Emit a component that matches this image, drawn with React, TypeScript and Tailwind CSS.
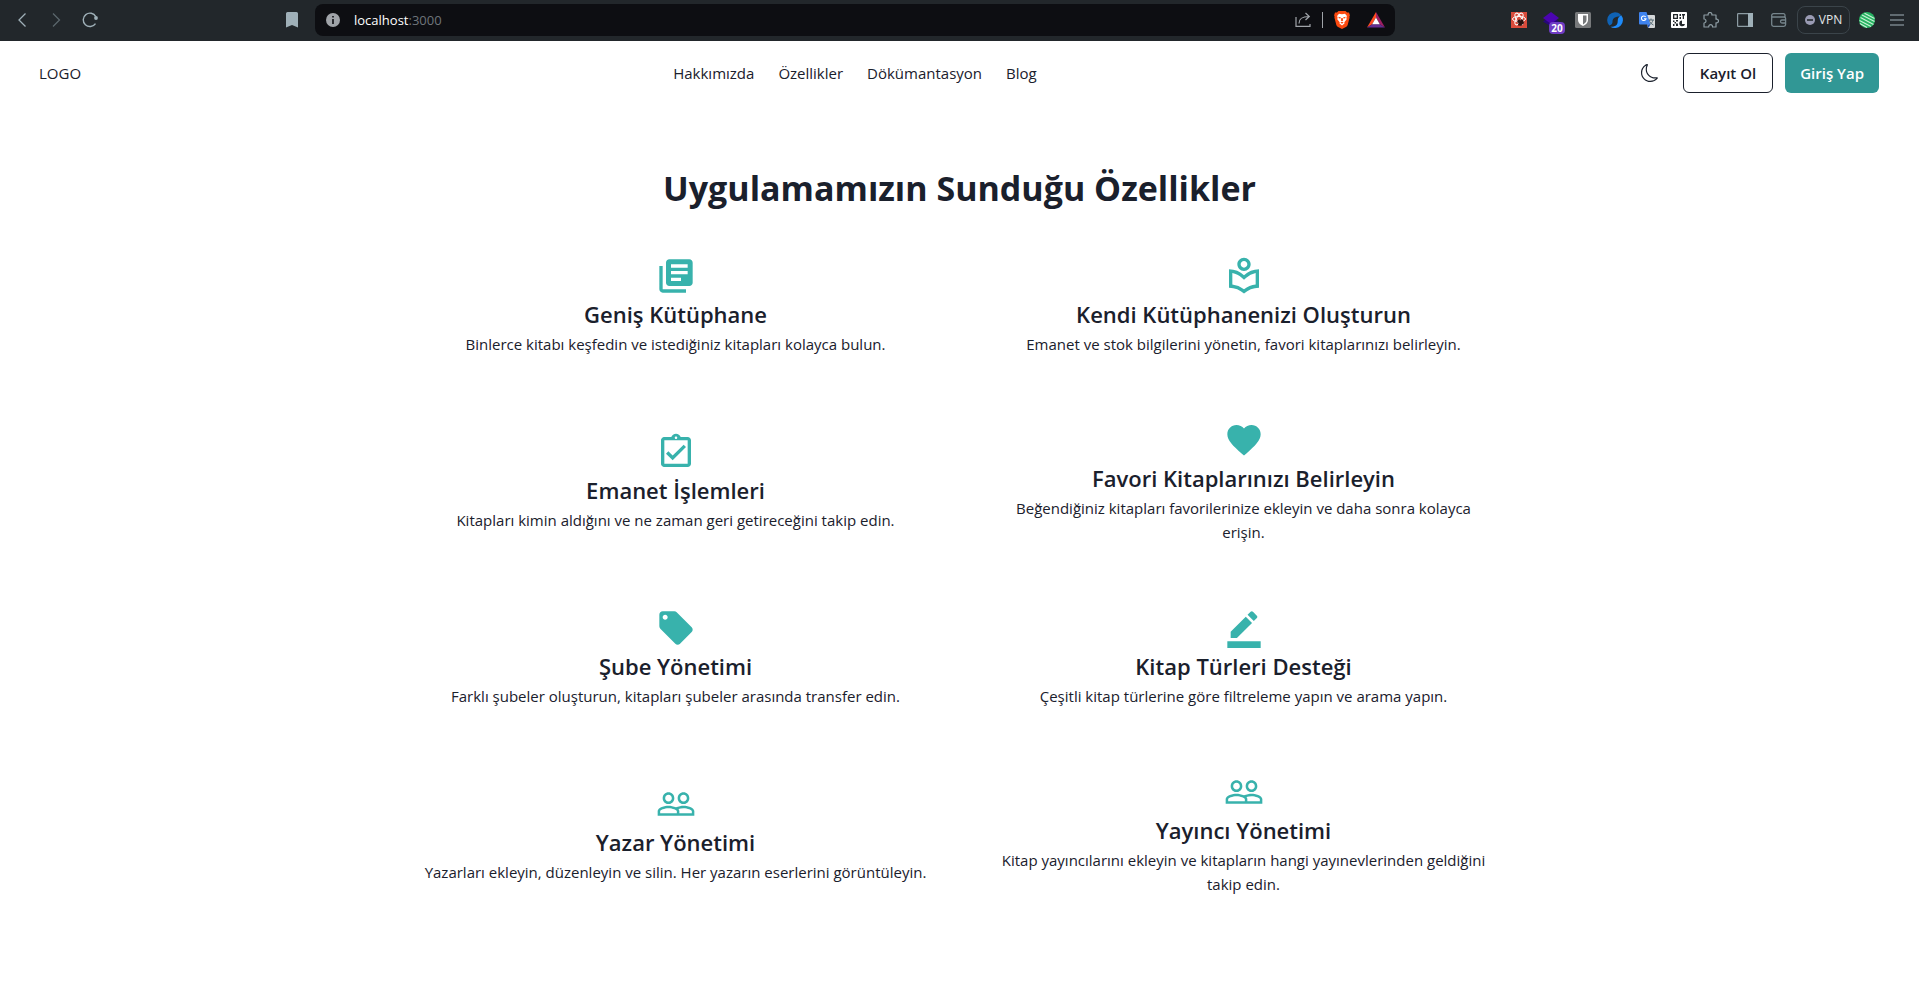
import type { ReactNode } from "react";
import {
  MdLibraryBooks,
  MdOutlineLocalLibrary,
  MdOutlineAssignmentTurnedIn,
  MdFavorite,
  MdLocalOffer,
  MdBorderColor,
  MdPeopleOutline,
} from "react-icons/md";
import { BsMoon } from "react-icons/bs";

type Feature = { icon: ReactNode; title: string; text: string };

const features: Feature[] = [
  { icon: <MdLibraryBooks />, title: "Geniş Kütüphane", text: "Binlerce kitabı keşfedin ve istediğiniz kitapları kolayca bulun." },
  { icon: <MdOutlineLocalLibrary />, title: "Kendi Kütüphanenizi Oluşturun", text: "Emanet ve stok bilgilerini yönetin, favori kitaplarınızı belirleyin." },
  { icon: <MdOutlineAssignmentTurnedIn />, title: "Emanet İşlemleri", text: "Kitapları kimin aldığını ve ne zaman geri getireceğini takip edin." },
  { icon: <MdFavorite />, title: "Favori Kitaplarınızı Belirleyin", text: "Beğendiğiniz kitapları favorilerinize ekleyin ve daha sonra kolayca\nerişin." },
  { icon: <MdLocalOffer />, title: "Şube Yönetimi", text: "Farklı şubeler oluşturun, kitapları şubeler arasında transfer edin." },
  { icon: <MdBorderColor />, title: "Kitap Türleri Desteği", text: "Çeşitli kitap türlerine göre filtreleme yapın ve arama yapın." },
  { icon: <MdPeopleOutline />, title: "Yazar Yönetimi", text: "Yazarları ekleyin, düzenleyin ve silin. Her yazarın eserlerini görüntüleyin." },
  { icon: <MdPeopleOutline />, title: "Yayıncı Yönetimi", text: "Kitap yayıncılarını ekleyin ve kitapların hangi yayınevlerinden geldiğini\ntakip edin." },
];

const links = ["Hakkımızda", "Özellikler", "Dökümantasyon", "Blog"];

function BarButton({ label, children }: { label: string; children: ReactNode }) {
  return (
    <button type="button" aria-label={label} className="flex h-8 w-8 shrink-0 items-center justify-center">
      {children}
    </button>
  );
}

function BraveIcon() {
  return (
    <svg width="16" height="18" viewBox="0 0 16 18">
      <path d="M4.500 0h7l1.600 1.600L15 1.500l.9 2.700-.5 1.500.2.900-2 7.600-1.200 1.500L8 18l-4.400-2.300-1.200-1.500-2-7.600.2-.9L.1 4.200 1 1.500l1.900.1z" fill="#fb4a10" />
      <path d="M5 2.800 8 3.200l3-.4 1.900 2.300-.5 1.700.3 1.400-2.400 3 .2 1.200L8 14.500l-2.500-2.100.2-1.200-2.400-3 .3-1.400-.5-1.700z" fill="#fff" />
      <path d="M4.400 5.800 7 6.400l-.6 1.200-1.600-.4zM11.600 5.800 9 6.400l.6 1.200 1.600-.4zM7.300 7h1.400l.5 2.500L8 10.300l-1.200-.8zM6.300 11.500 8 10.800l1.700.7L8 12.800z" fill="#fb4a10" />
    </svg>
  );
}

function TriangleIcon() {
  return (
    <svg width="18" height="16" viewBox="0 0 18 16">
      <path d="M9 0 0 15.500 5.200 12.200 9 5.600z" fill="#ff4a1f" />
      <path d="M9 0l9 15.500-5.200-3.300L9 5.600z" fill="#9e1f63" />
      <path d="M0 15.500h18l-5.200-3.300H5.200z" fill="#662d91" />
      <path d="M9 5.600 12.800 12.200H5.200z" fill="#fff" />
    </svg>
  );
}

function ReactExtIcon() {
  return (
    <svg width="16" height="16" viewBox="0 0 16 16">
      <path d="M0 0h16v16H0z" fill="#d94b3b" />
      <g fill="none" stroke="#fff" strokeWidth="1">
        <ellipse cx="8" cy="7" rx="6.500" ry="2.600" />
        <ellipse cx="8" cy="7" rx="6.500" ry="2.600" transform="rotate(60 8 7)" />
        <ellipse cx="8" cy="7" rx="6.500" ry="2.600" transform="rotate(120 8 7)" />
      </g>
      <path d="M7 8 8.500 7.500 9.500 8.500l1-1.500 1.500 1 .5 1.500.5 1-.5 1.500-1.500.5-.5 1.500-2-.5L8 14l-1-1 .5-2-1.500-1z" fill="#2a1210" />
    </svg>
  );
}

function LayersIcon() {
  return (
    <span className="relative block h-4 w-4">
      <svg width="16" height="16" viewBox="0 0 16 16">
        <path d="M8 4 16 9.500 8 14.500 0 9.500z" fill="#27077a" />
        <path d="M8 0 16 6 8 12 0 6z" fill="#4b04b0" />
      </svg>
      <span className="absolute top-2.5 left-1.5 flex h-3 w-4 items-center justify-center rounded-sm bg-[#6f3cc4] text-[10px] leading-3 font-bold text-white">20</span>
    </span>
  );
}

function ShieldIcon() {
  return (
    <svg width="16" height="16" viewBox="0 0 16 16">
      <rect width="16" height="16" rx="1.500" fill="#77797b" />
      <path d="M3 2h10v6c0 3-2.500 4.800-5 6-2.500-1.200-5-3-5-6z" fill="#fff" />
      <path d="M8 3.400h3.500V8c0 2-1.500 3.400-3.500 4.400z" fill="#77797b" />
    </svg>
  );
}

function SwirlIcon() {
  return (
    <svg width="16" height="16" viewBox="0 0 16 16">
      <path d="M13.500 2.200A8 8 0 0 0 2.300 13.600C4.300 13 5.500 12 5.500 10 5.500 6 8 4.500 13.500 4.500z" fill="#0f62b4" />
      <path d="M14.300 3.200A8 8 0 0 1 3.500 14.700C8.500 14.700 10.700 13 10.700 9.200 10.700 6 11.500 5 14.300 3.200z" fill="#1e8bfa" />
      <path d="M6 9.300C6.200 7.500 7.500 6.600 10.400 6.500c-.3 1.900-1.600 2.700-4.400 2.800z" fill="#22272b" />
    </svg>
  );
}

function TranslateIcon() {
  return (
    <svg width="16" height="16" viewBox="0 0 16 16">
      <path d="M6 3h9a1 1 0 0 1 1 1v11a1 1 0 0 1-1 1H9z" fill="#d3d6d8" />
      <path d="M9 8h6M12 6.500V8M10 8c.6 2 2 3.800 4.500 5M14 8c-.5 2-1.800 4-4 5.200" fill="none" stroke="#566a73" strokeWidth="1" />
      <path d="M1 0h6.500l3.800 12.500H1a1 1 0 0 1-1-1V1a1 1 0 0 1 1-1z" fill="#3f83ee" />
      <path d="M8 12.500h3.300L9.500 16z" fill="#1e56c0" />
      <path d="M6.700 5A2.300 2.300 0 1 0 7 6.800H5" fill="none" stroke="#fff" strokeWidth="1.100" />
    </svg>
  );
}

function QrIcon() {
  return (
    <svg width="16" height="16" viewBox="0 0 16 16">
      <rect width="16" height="16" rx="1" fill="#fff" />
      <g fill="#22272b">
        <path d="M2 2h5v5H2zM3.300 3.300v2.400h2.400V3.300z" fillRule="evenodd" />
        <path d="M8.500 2H10v2H8.500zM11 2h3v1.500h-1V7h-1.300V3.500H11zM8.500 5H10v2H8.500zM2 8.500h1.500V10H2zM5 8h2v1.500H5zM3.500 10H5v1.500H3.500zM2 12h1.500v2H2zM5 11.500h2V14H5z" />
        <path d="M11 8.500A2.900 2.900 0 1 0 14 12h-3z" />
      </g>
    </svg>
  );
}

function PuzzleIcon() {
  return (
    <svg width="16" height="16" viewBox="0 0 16 16" fill="none" stroke="#8d9ca3" strokeWidth="1.200" strokeLinejoin="round">
      <path d="M1 3h4.200a1.900 1.900 0 1 1 3.600 0H13v4.200a1.900 1.900 0 1 1 0 3.600V15H9.500a1.900 1.900 0 1 0-3.700 0H1v-4a1.900 1.900 0 1 0 0-4z" />
    </svg>
  );
}

function BrowserBar() {
  return (
    <div className="flex h-[41px] items-center bg-[#22272b] px-1.5 pb-px text-[#9fb0b8]">
      <div className="flex w-[309px] shrink-0 items-center gap-0.5">
        <BarButton label="Geri">
          <svg width="16" height="16" viewBox="0 0 16 16" fill="none" stroke="currentColor" strokeWidth="1.300"><path d="M11.500 1.500 5 8l6.500 6.500" /></svg>
        </BarButton>
        <BarButton label="İleri">
          <svg width="16" height="16" viewBox="0 0 16 16" fill="none" stroke="#5b666c" strokeWidth="1.300"><path d="M5 1.500 11.500 8 5 14.500" /></svg>
        </BarButton>
        <BarButton label="Yenile">
          <svg width="18" height="18" viewBox="0 0 18 18" fill="none" stroke="currentColor" strokeWidth="1.400"><path d="M14.500 12.600A6.700 6.700 0 1 1 14.800 5.600" /><circle cx="15" cy="7" r="1.900" fill="currentColor" stroke="none" /></svg>
        </BarButton>
        <div className="flex-1" />
        <div className="pr-[7px]">
          <BarButton label="Yer imi">
            <svg width="12" height="16" viewBox="0 0 12 16" fill="currentColor"><path d="M1.500 0h9A1.500 1.500 0 0 1 12 1.500V15.500L6 13 0 15.500V1.500A1.500 1.500 0 0 1 1.500 0z" /></svg>
          </BarButton>
        </div>
      </div>
      <div className="flex h-8 w-full max-w-[1080px] min-w-0 items-center rounded-lg bg-[#0d0e12] pr-[3px] pl-[11px]">
        <svg className="shrink-0" width="14" height="14" viewBox="0 0 14 14"><circle cx="7" cy="7" r="7" fill="#a0a4a9" /><path d="M6.200 3h1.600v1.600H6.200zM6.200 6h1.600v5H6.200z" fill="#0d0e12" /></svg>
        <div className="flex-1 pl-3.5 text-[13px] leading-5 text-[#6f757b]"><span className="text-white">localhost</span>:3000</div>
        <BarButton label="Paylaş">
          <svg width="16" height="16" viewBox="0 0 16 16" fill="none" stroke="#a0a4a9" strokeWidth="1.200"><path d="M1 5v9.300h14V12M4 11.500C4 6.500 7 4.500 14 4.500M10.500 1 14.300 4.500 10.500 8" /></svg>
        </BarButton>
        <div className="mx-[3px] h-4 w-px bg-[#a0a4a9]" />
        <div className="flex gap-0.5">
          <BarButton label="Brave Shields"><BraveIcon /></BarButton>
          <BarButton label="Brave Rewards"><TriangleIcon /></BarButton>
        </div>
      </div>
      <div className="ml-auto flex shrink-0 items-center">
        <BarButton label="React"><ReactExtIcon /></BarButton>
        <BarButton label="Katmanlar"><LayersIcon /></BarButton>
        <BarButton label="Parola kasası"><ShieldIcon /></BarButton>
        <BarButton label="Eşitleme"><SwirlIcon /></BarButton>
        <BarButton label="Çeviri"><TranslateIcon /></BarButton>
        <BarButton label="QR kod"><QrIcon /></BarButton>
        <div className="flex items-center gap-0.5">
          <BarButton label="Uzantılar"><PuzzleIcon /></BarButton>
          <BarButton label="Kenar çubuğu">
            <svg width="16" height="14" viewBox="0 0 16 14"><rect x=".6" y=".6" width="14.800" height="12.800" rx=".6" fill="none" stroke="#8d9ca3" strokeWidth="1.200" /><path d="M11 0h5v14h-5z" fill="#9fb0b8" /></svg>
          </BarButton>
          <BarButton label="Cüzdan">
            <svg width="16" height="14" viewBox="0 0 16 14" fill="none" stroke="#76858c" strokeWidth="1.300"><path d="M14 4V2.200A1.500 1.500 0 0 0 12.500.7h-10A1.800 1.800 0 0 0 .7 2.500v9A1.800 1.800 0 0 0 2.500 13.300h10.300a1.800 1.800 0 0 0 1.800-1.800V5.500A1.500 1.500 0 0 0 13.200 4H1M15 7h-4a1.500 1.500 0 0 0 0 3h4" /></svg>
          </BarButton>
          <button type="button" className="flex h-7 w-[53px] items-center justify-center gap-1 rounded-lg border border-[#3b444a] text-[12px] text-[#e3e6e8]">
            <svg width="10" height="10" viewBox="0 0 10 10"><circle cx="5" cy="5" r="5" fill="#9a9bb3" /><path d="M2 4.200h6v1.600H2z" fill="#22272b" /></svg>
            VPN
          </button>
        </div>
        <button type="button" aria-label="Profil" className="flex h-8 w-[31px] items-center justify-center pl-[3px]">
          <svg width="16" height="16" viewBox="0 0 16 16">
            <circle cx="8" cy="8" r="8" fill="#27b262" />
            <path d="M3 3 15.500 9.500M1.500 5.500 14.500 12.500M.5 8.500l11.500 6M5.500 1.200 15.500 6.500M.8 11.500 8 15.500" stroke="#c9f3d6" strokeWidth="1.100" />
          </svg>
        </button>
        <BarButton label="Menü">
          <svg width="14" height="12" viewBox="0 0 14 12" stroke="#9fb0b8" strokeWidth="1.200"><path d="M0 1h14M0 6h14M0 11h14" /></svg>
        </BarButton>
      </div>
    </div>
  );
}

export default function App() {
  return (
    <div className="min-h-screen bg-white font-['Open_Sans','Noto_Sans',sans-serif] text-[#1a202c]">
      <BrowserBar />
      <header className="flex h-16 items-center justify-between pr-10 pl-[39px]">
        <span className="text-[15px]">LOGO</span>
        <nav className="flex gap-6 text-[15px]">
          {links.map((l) => <a key={l} href="#">{l}</a>)}
        </nav>
        <div className="flex items-center gap-3">
          <button type="button" aria-label="Tema" className="flex h-10 w-[42px] items-center justify-center"><BsMoon size={18} /></button>
          <button type="button" className="h-10 rounded-md border border-[#1a202c] px-4 text-[15px] font-semibold">Kayıt Ol</button>
          <button type="button" className="h-10 rounded-md bg-[#319795] px-[15px] text-[15px] font-semibold text-white">Giriş Yap</button>
        </div>
      </header>
      <main className="flex flex-col items-center pt-14">
        <h1 className="text-[34px] leading-[54px] font-bold">Uygulamamızın Sunduğu Özellikler</h1>
        <div className="mt-[41px] grid w-full max-w-[1072px] grid-cols-2 items-center gap-16">
          {features.map((f) => (
            <section key={f.title} className="flex flex-col items-center text-center">
              <div className="text-[40px] text-[#38b2ac]">{f.icon}</div>
              <h2 className="text-[22px] leading-9 font-semibold">{f.title}</h2>
              <p className="text-[15px] leading-6 whitespace-pre-line">{f.text}</p>
            </section>
          ))}
        </div>
      </main>
    </div>
  );
}
